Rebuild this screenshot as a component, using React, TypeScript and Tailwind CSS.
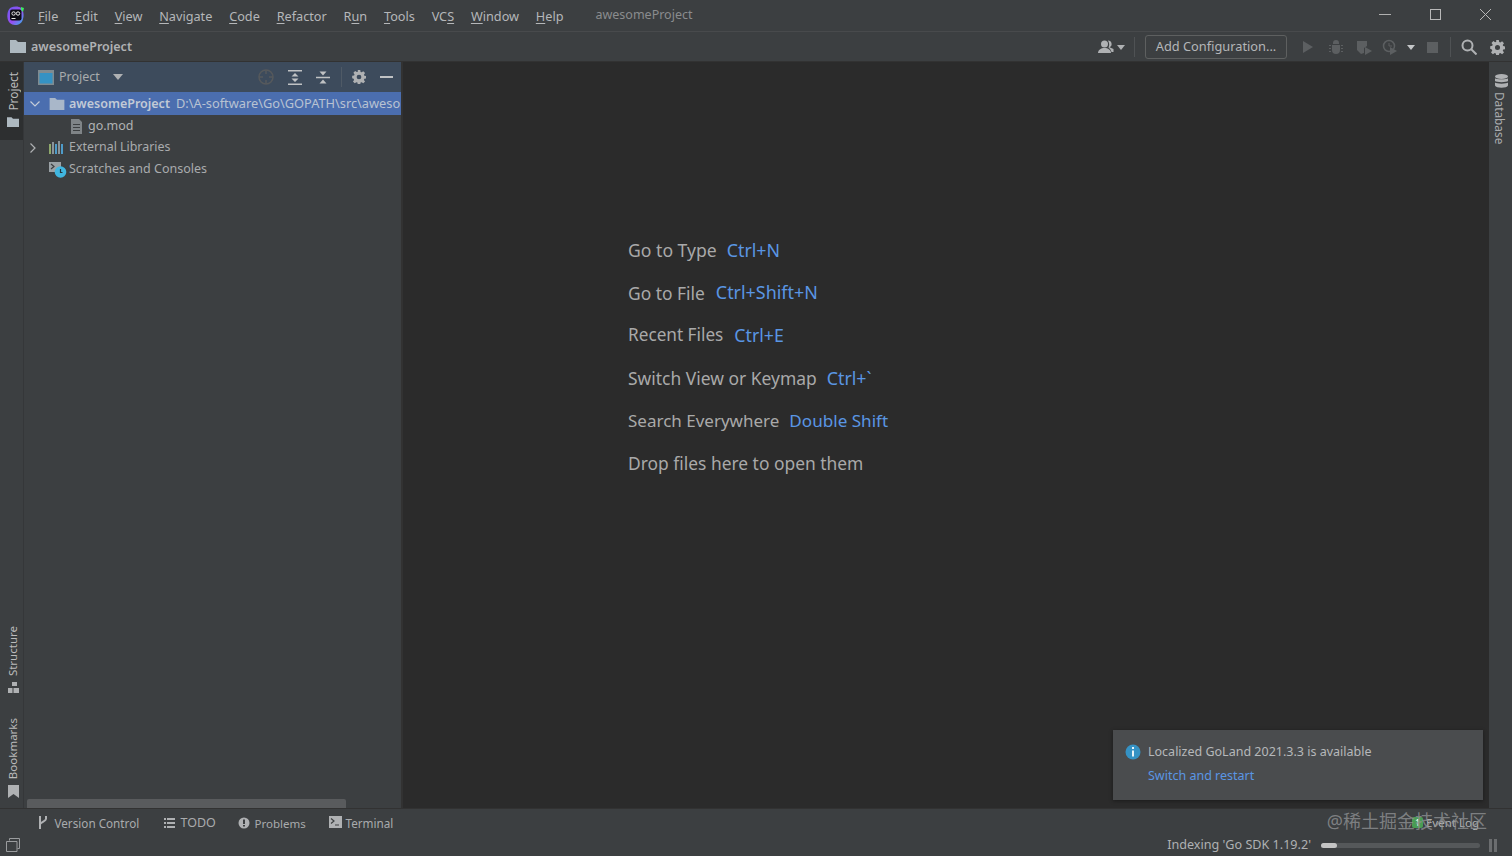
import React from "react";

const font = { fontFamily: '"Noto Sans","Noto Sans CJK SC",sans-serif' };

const menus: [string, string, string][] = [
  ["", "F", "ile"], ["", "E", "dit"], ["", "V", "iew"], ["", "N", "avigate"], ["", "C", "ode"],
  ["", "R", "efactor"], ["R", "u", "n"], ["", "T", "ools"], ["VC", "S", ""], ["", "W", "indow"], ["", "H", "elp"],
];

function Logo() {
  return (
    <svg width="18" height="20" viewBox="0 0 18 20">
      <defs>
        <linearGradient id="lg" x1="0" y1="0" x2="1" y2="1">
          <stop offset="0" stopColor="#6a5cf0" />
          <stop offset="0.55" stopColor="#9a4cf2" />
          <stop offset="1" stopColor="#2fb8e8" />
        </linearGradient>
      </defs>
      <path d="M4 1.500C7 0 12 0 14 2c3 3 3 8 2 11-1 4-4 6-8 6-4 0-7-3-7.500-7C0 8 1 3 4 1.500z" fill="url(#lg)" />
      <path d="M14 1l3 1-1 4-2-2z" fill="#3bea62" />
      <rect x="3" y="3.500" width="11.500" height="11" rx="2" fill="#0c0c14" />
      <circle cx="6.600" cy="7.500" r="1.700" fill="none" stroke="#e8e8e8" strokeWidth="1" />
      <circle cx="11" cy="7.500" r="1.700" fill="none" stroke="#e8e8e8" strokeWidth="1" />
      <rect x="4.500" y="12" width="4" height="1" fill="#e8e8e8" />
    </svg>
  );
}

function Folder({ c = "#aeb9c0", w = 16, h = 13 }: { c?: string; w?: number; h?: number }) {
  return (
    <svg className="shrink-0" width={w} height={h} viewBox="0 0 16 13">
      <path d="M0 0h6l2 2h8v11H0z" fill={c} />
    </svg>
  );
}

function Gear({ size = 15, c = "#afb1b3" }: { size?: number; c?: string }) {
  return (
    <svg width={size} height={size} viewBox="0 0 16 16">
      <path
        fillRule="evenodd"
        d="M6.600 0h2.800l.4 2.200 1.200.5L12.900 1.400l2 2-1.300 1.900.5 1.200 2.200.4v2.800l-2.200.4-.5 1.200 1.300 1.900-2 2-1.900-1.300-1.200.5-.4 2.200H6.600l-.4-2.200-1.200-.5-1.900 1.300-2-2 1.300-1.900-.5-1.200L.2 9.400V6.600l2.200-.4.5-1.200-1.300-1.900 2-2 1.900 1.300 1.200-.5zM8 5.300a2.700 2.700 0 1 0 0 5.400 2.700 2.700 0 0 0 0-5.400z"
        fill={c}
      />
    </svg>
  );
}

function Hint({ a, b, last, size, gap, bsize }: { a: string; b?: string; last?: boolean; size: string; gap: string; bsize?: string }) {
  return (
    <div className={`flex h-[20px] items-center ${gap} ${last ? "" : "mb-[22.700px]"}`}>
      <span className={`text-[#a9a9a9] ${size}`}>{a}</span>
      {b && <span className={`text-[#5a96e4] ${bsize}`}>{b}</span>}
    </div>
  );
}

function SideLabel({ text, icon, size }: { text: string; icon: React.ReactNode; size: string }) {
  return (
    <div className="flex flex-col items-center gap-[6px]">
      <span className={`${size} leading-[14px] text-[#bbbbbb]`} style={{ writingMode: "vertical-rl", transform: "rotate(180deg)" }}>
        {text}
      </span>
      {icon}
    </div>
  );
}

function StatusTab({ icon, label, w, size }: { icon: React.ReactNode; label: string; w: string; size: string }) {
  return (
    <div className={`flex items-center ${w}`}>
      <span className="flex w-[16.500px] justify-start -mt-[2px]">{icon}</span>
      <span className={`${size} text-[#a9abad]`}>{label}</span>
    </div>
  );
}

export default function App() {
  return (
    <div className="flex h-[856px] w-[1512px] flex-col overflow-hidden bg-[#3c3f41]" style={font}>
      {/* title bar */}
      <div className="flex h-[32px] shrink-0 items-center border-b border-[#484a4c] pl-[7px] text-[12.700px] text-[#b5b7b9]">
        <Logo />
        <nav className="ml-[13px] flex gap-[16.800px]">
          {menus.map(([p, u, r]) => (
            <span key={p + u + r} className="mt-[2px]">
              {p}
              <span className="underline underline-offset-2">{u}</span>
              {r}
            </span>
          ))}
        </nav>
        <span className="ml-[32px] text-[12.500px] text-[#8a8c8e]">awesomeProject</span>
        <div className="ml-auto flex h-full items-center pb-[2px]">
          <div className="flex w-[51px] justify-center">
            <div className="h-px w-[12px] bg-[#b0b0b0]" />
          </div>
          <div className="flex w-[51px] justify-center">
            <div className="h-[11px] w-[11px] border border-[#b8b8b8]" />
          </div>
          <div className="flex w-[51px] justify-center pr-[2px]">
            <svg width="11" height="11" viewBox="0 0 11 11" stroke="#b8b8b8" strokeWidth="1">
              <path d="M0 0l11 11M11 0L0 11" />
            </svg>
          </div>
        </div>
      </div>

      {/* navigation bar */}
      <div className="flex h-[30px] shrink-0 items-center border-b border-[#323232] pl-[10px] pr-[7px]">
        <Folder />
        <span className="ml-[5px] mt-[1px] text-[12.500px] font-semibold text-[#b0b2b4]">awesomeProject</span>
        <div className="ml-auto mt-[1px] flex items-center">
          <svg width="16" height="14" viewBox="0 0 16 14" fill="#afb1b3">
            <circle cx="6.500" cy="4" r="3.500" />
            <path d="M0 13c0-3 3-5 6.500-5S13 10 13 13z" />
            <path d="M10 .6a3.500 3.500 0 0 1 1.500 6.700l4 1.700v3h-2c-.5-2-1.500-3-3-4.500 1-1.500 1-4.500-.5-6.900z" />
          </svg>
          <svg className="ml-[3px]" width="8" height="5" viewBox="0 0 8 5" fill="#afb1b3">
            <path d="M0 0h8L4 5z" />
          </svg>
          <div className="ml-[9px] h-[20px] w-px bg-[#4f5254]" />
          <div className="ml-[10px] flex h-[24px] w-[142px] items-center justify-center rounded-[3px] border border-[#5e6060] text-[12.800px] text-[#b4b6b8]">
            Add Configuration...
          </div>
          <svg className="ml-[15px]" width="12" height="14" viewBox="0 0 12 14" fill="#5c5f61">
            <path d="M1 1l10 6-10 6z" />
          </svg>
          <svg className="ml-[14px]" width="16" height="15" viewBox="0 0 16 15" fill="#5c5f61">
            <path d="M5 3a3 3 0 0 1 6 0v1H5zM4 5h8v5a4 4 0 0 1-8 0zM1 5h2v1H1zM13 5h2v1h-2zM1 8h2v1H1zM13 8h2v1h-2zM1 11h2v1H1zM13 11h2v1h-2z" />
          </svg>
          <svg className="ml-[12px]" width="16" height="15" viewBox="0 0 16 15" fill="#5c5f61">
            <path d="M1 1h10v5l-3 2v5l-3 1-4-4zM9 7l7 4-7 4z" />
          </svg>
          <svg className="ml-[10px]" width="16" height="16" viewBox="0 0 16 16">
            <circle cx="7" cy="7" r="5.500" fill="none" stroke="#5c5f61" strokeWidth="1.500" />
            <path d="M7 4v3h3" fill="none" stroke="#5c5f61" />
            <path d="M8 8l7 4-7 4z" fill="#5c5f61" />
          </svg>
          <svg className="ml-[9px]" width="8" height="5" viewBox="0 0 8 5" fill="#c4c6c8">
            <path d="M0 0h8L4 5z" />
          </svg>
          <div className="ml-[12px] h-[11px] w-[11px] bg-[#5c5f61]" />
          <div className="ml-[12px] h-[20px] w-px bg-[#4f5254]" />
          <svg className="ml-[10px]" width="16" height="16" viewBox="0 0 16 16" fill="none" stroke="#afb1b3" strokeWidth="2">
            <circle cx="6.500" cy="6.500" r="5" />
            <path d="M10 10l5.500 5.500" />
          </svg>
          <span className="ml-[13px]">
            <Gear />
          </span>
        </div>
      </div>

      {/* main */}
      <div className="flex min-h-0 flex-1">
        {/* left tool strip */}
        <div className="flex w-[24px] shrink-0 flex-col border-r border-[#353739]">
          <div className="flex h-[78px] flex-col items-center bg-[#2d2f30] pl-[3px] pt-[10px]">
            <SideLabel text="Project" size="text-[11.800px]" icon={<Folder w={12} h={10} />} />
          </div>
          <div className="mt-auto flex flex-col items-center pb-[10px] pl-[3px]">
            <SideLabel
              text="Structure"
              size="text-[11.500px]"
              icon={
                <svg width="11" height="11" viewBox="0 0 11 11" fill="#afb1b3">
                  <path d="M0 6h4.500v5H0zM5.500 6H11v5H5.500zM4 0h5v4H4z" />
                </svg>
              }
            />
            <div className="h-[25px]" />
            <SideLabel
              text="Bookmarks"
              size="text-[11.500px]"
              icon={
                <svg width="11" height="13" viewBox="0 0 11 13" fill="#afb1b3">
                  <path d="M0 0h11v13L5.500 9 0 13z" />
                </svg>
              }
            />
          </div>
        </div>

        {/* project panel */}
        <div className="flex w-[377px] shrink-0 flex-col">
          <div className="flex h-[30px] shrink-0 items-center bg-[#3d4b5c] pl-[14px] text-[12.500px] text-[#a9abad]">
            <svg width="16" height="15" viewBox="0 0 16 15">
              <rect x="0" y="0" width="16" height="15" fill="#7f8b91" />
              <rect x="1.500" y="3" width="13" height="10.500" fill="#3592c4" />
            </svg>
            <span className="ml-[5px] mt-[1px]">Project</span>
            <svg className="ml-[13px]" width="10" height="6" viewBox="0 0 10 6" fill="#afb1b3">
              <path d="M0 0h10L5 6z" />
            </svg>
            <div className="ml-auto flex items-center pr-[8px]">
              <svg width="16" height="16" viewBox="0 0 16 16" fill="none" stroke="#56595c" strokeWidth="1.500">
                <circle cx="8" cy="8" r="7" />
                <path d="M8 1v4M8 11v4M1 8h4M11 8h4" />
              </svg>
              <svg className="ml-[14px]" width="14" height="15" viewBox="0 0 14 15" fill="#c0c2c4">
                <path d="M0 0h14v1.600H0zM0 13.400h14V15H0zM7 3l3.500 3.600h-7zM7 12l-3.500-3.600h7z" />
              </svg>
              <svg className="ml-[14px]" width="14" height="15" viewBox="0 0 14 15" fill="#c0c2c4">
                <path d="M0 6.700h14v1.600H0zM7 5.500L3.500 1.500h7zM7 9.500l3.500 4h-7z" />
              </svg>
              <div className="ml-[11px] h-[20px] w-px bg-[#4f5a66]" />
              <span className="ml-[10px]">
                <Gear size={14} />
              </span>
              <div className="ml-[14px] h-[2px] w-[13px] bg-[#c0c2c4]" />
            </div>
          </div>

          <div className="flex h-[23px] shrink-0 items-center overflow-hidden whitespace-nowrap bg-[#4b6eaf] pl-[6px]">
            <svg className="shrink-0" width="10" height="6" viewBox="0 0 10 6" fill="none" stroke="#c4ccd8" strokeWidth="1.200">
              <path d="M.500.500L5 5 9.500.500" />
            </svg>
            <span className="ml-[9px] shrink-0">
              <Folder c="#a9b7c9" w={16} h={12} />
            </span>
            <span className="ml-[4px] mt-[1px] shrink-0 text-[12.500px] font-semibold text-[#c2cad6]">awesomeProject</span>
            <span className="ml-[6px] text-[12.800px] text-[#b8c2d2]">D:\A-software\Go\GOPATH\src\aweso</span>
          </div>

          <div className="flex h-[22px] items-center pl-[47px] text-[12.500px] text-[#b0b2b4]">
            <svg width="11" height="15" viewBox="0 0 11 15" fill="#7f8487">
              <path d="M0 0h8l3 3v12H0zM2 5h7v1H2zM2 8h7v1H2zM2 11h7v1H2z" fillRule="evenodd" />
            </svg>
            <span className="ml-[6px]">go.mod</span>
          </div>
          <div className="flex h-[21px] items-center pl-[6px] text-[12.400px] text-[#a9abad]">
            <svg width="6" height="10" viewBox="0 0 6 10" fill="none" stroke="#afb1b3" strokeWidth="1.200">
              <path d="M.500.500L5 5 .500 9.500" />
            </svg>
            <svg className="ml-[13px]" width="16" height="13" viewBox="0 0 16 13">
              <rect x="0" y="3" width="2" height="10" fill="#8ea86b" />
              <rect x="3" y="1" width="2" height="12" fill="#8a9499" />
              <rect x="6" y="3" width="2" height="10" fill="#4e9bc9" />
              <rect x="9" y="0" width="2" height="13" fill="#8a9499" />
              <rect x="12" y="3" width="2" height="10" fill="#4e9bc9" />
            </svg>
            <span className="ml-[4px]">External Libraries</span>
          </div>
          <div className="flex h-[23px] items-center pl-[25px] text-[12.500px] text-[#a9abad]">
            <svg width="18" height="16" viewBox="0 0 18 16">
              <rect x="0" y="0" width="12" height="10" fill="#9aa1a5" />
              <path d="M2 2l3 2.500L2 7" fill="none" stroke="#3c3f41" strokeWidth="1.200" />
              <circle cx="11.500" cy="10" r="5.800" fill="#40b6e0" />
              <path d="M11.500 7v3.500h2" fill="none" stroke="#24343c" strokeWidth="1.200" />
            </svg>
            <span className="ml-[2px]">Scratches and Consoles</span>
          </div>

          <div className="mt-auto ml-[3px] h-[9px] w-[319px] rounded-t-[2px] bg-[#595b5d]" />
        </div>

        {/* editor */}
        <div className="relative min-w-0 flex-1 border-l-2 border-[#323232] bg-[#2b2b2b] pl-[225px] pt-[178px]">
          <Hint a="Go to Type" b="Ctrl+N" size="text-[17.600px]" bsize="text-[17.800px]" gap="gap-[10px]" />
          <Hint a="Go to File" b="Ctrl+Shift+N" size="text-[17.400px]" bsize="text-[17.900px]" gap="gap-[11px]" />
          <Hint a="Recent Files" b="Ctrl+E" size="text-[17.200px]" bsize="text-[17.700px]" gap="gap-[11px]" />
          <Hint a="Switch View or Keymap" b="Ctrl+`" size="text-[17.450px]" bsize="text-[17.800px]" gap="gap-[10px]" />
          <Hint a="Search Everywhere" b="Double Shift" size="text-[17px]" bsize="text-[17.100px]" gap="gap-[10px]" />
          <Hint a="Drop files here to open them" size="text-[17.400px]" gap="gap-[10px]" last />

          <div className="absolute bottom-[8px] right-[6px] h-[70px] w-[370px] bg-[#4a4c4e] pl-[12px] pt-[13px] text-[12.500px] shadow-[0_1px_4px_rgba(0,0,0,0.4)]">
            <div className="flex h-[18px] items-center">
              <svg width="16" height="16" viewBox="0 0 16 16">
                <circle cx="8" cy="8" r="7.500" fill="#3592c4" />
                <rect x="7" y="3" width="2" height="2" fill="#e8f3f8" />
                <rect x="7" y="6.500" width="2" height="6" fill="#e8f3f8" />
              </svg>
              <span className="ml-[7px] text-[#b6b8ba]">Localized GoLand 2021.3.3 is available</span>
            </div>
            <div className="ml-[23px] mt-[6px] text-[#5a96e4]">Switch and restart</div>
          </div>
        </div>

        {/* right strip */}
        <div className="flex w-[23px] shrink-0 flex-col items-center bg-[#3c3f41] pr-[2px] pt-[12px]">
          <svg className="ml-[3px]" width="13" height="14" viewBox="0 0 13 14" fill="#afb1b3">
            <ellipse cx="6.500" cy="2.500" rx="6.500" ry="2.500" />
            <path d="M0 4.200c1 1.500 12 1.500 13 0V7c-1 1.500-12 1.500-13 0zM0 8.600c1 1.500 12 1.500 13 0v3c-1 3-12 3-13 0z" />
          </svg>
          <span className="ml-[1px] mt-[4px] text-[11.800px] leading-[14px] text-[#a9abad]" style={{ writingMode: "vertical-rl" }}>
            Database
          </span>
        </div>
      </div>

      {/* tool window bar */}
      <div className="relative flex h-[26px] shrink-0 items-center border-t border-[#323232] pl-[38px] pt-[4px]">
        <StatusTab
          w="w-[126px]"
          label="Version Control"
          size="text-[11.700px]"
          icon={
            <svg width="10" height="13" viewBox="0 0 10 13" fill="none" stroke="#afb1b3" strokeWidth="2">
              <path d="M2 0v13M8 0v3c0 2-4 3-6 5" />
            </svg>
          }
        />
        <StatusTab
          w="w-[74px]"
          label="TODO"
          size="text-[12.500px]"
          icon={
            <svg width="11" height="10" viewBox="0 0 11 10" fill="#afb1b3">
              <path d="M0 0h2v2H0zM3 0h8v2H3zM0 4h2v2H0zM3 4h8v2H3zM0 8h2v2H0zM3 8h8v2H3z" />
            </svg>
          }
        />
        <StatusTab
          w="w-[91px]"
          label="Problems"
          size="text-[11.500px]"
          icon={
            <svg width="12" height="12" viewBox="0 0 12 12">
              <circle cx="6" cy="6" r="5.500" fill="#afb1b3" />
              <rect x="5" y="2.500" width="2" height="4.500" fill="#3c3f41" />
              <rect x="5" y="8" width="2" height="1.500" fill="#3c3f41" />
            </svg>
          }
        />
        <StatusTab
          w="w-[70px]"
          label="Terminal"
          size="text-[11.700px]"
          icon={
            <svg width="13" height="12" viewBox="0 0 13 12">
              <rect width="13" height="12" fill="#afb1b3" />
              <path d="M2 2.500l3 2.500-3 2.500M6 9h4" fill="none" stroke="#3c3f41" strokeWidth="1.200" />
            </svg>
          }
        />
        <div className="absolute right-[33px] top-[8px] flex items-center">
          <div className="flex h-[11px] w-[11px] items-center justify-center rounded-[2px] bg-[#499c54] text-[8px] leading-none text-white">1</div>
          <span className="ml-[3px] text-[11.500px] leading-none text-[#b0b2b4]">Event Log</span>
        </div>
        <span className="absolute right-[25px] top-[-1px] text-[18px] leading-[26px] text-[#8f9193]/80">@稀土掘金技术社区</span>
      </div>

      {/* status bar */}
      <div className="flex h-[22px] shrink-0 items-center pl-[6px] pr-[15px]">
        <svg width="14" height="14" viewBox="0 0 14 14" fill="none" stroke="#9a9c9e" strokeWidth="1">
          <path d="M3.500 2.500V.500h10v10h-2M.500 3.500h10.500v10H.500z" />
        </svg>
        <span className="ml-auto text-[12.600px] text-[#afb1b3]">Indexing &apos;Go SDK 1.19.2&apos;</span>
        <div className="ml-[10px] h-[5px] w-[159px] rounded-full bg-[#55585a]">
          <div className="h-full w-[16px] rounded-full bg-[#c4c4c4]" />
        </div>
        <div className="ml-[9px] flex gap-[2px]">
          <div className="h-[13px] w-[3px] bg-[#6b6d6f]" />
          <div className="h-[13px] w-[3px] bg-[#6b6d6f]" />
        </div>
      </div>
    </div>
  );
}
